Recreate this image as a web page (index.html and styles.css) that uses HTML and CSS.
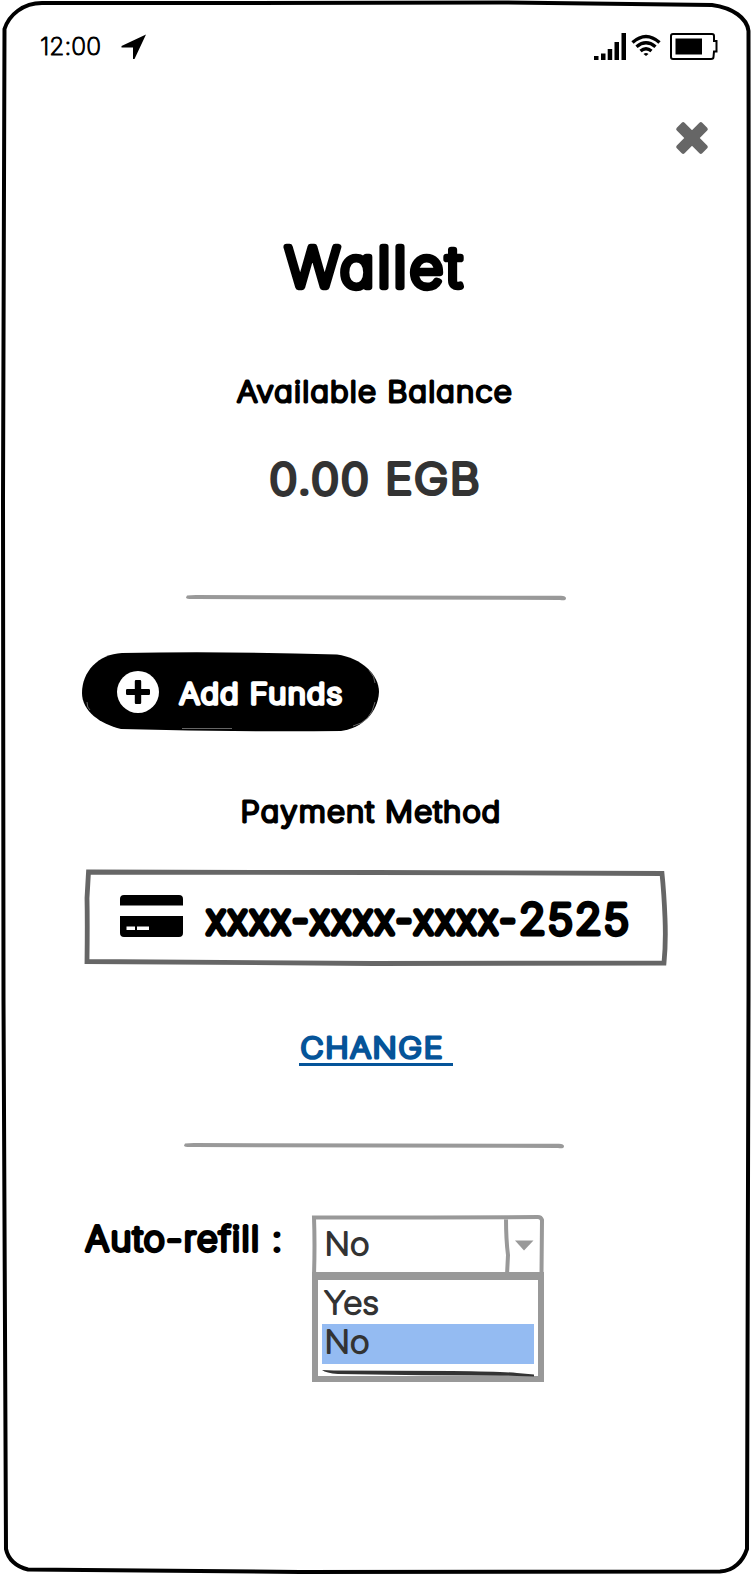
FILE: index.html
```html
<!DOCTYPE html>
<html lang="en">
<head>
<meta charset="utf-8">
<title>Wallet</title>
<link rel="stylesheet" href="styles.css">
</head>
<body>
<main class="phone">
  <svg class="outline" viewBox="0 0 752 1574" aria-hidden="true">
    <path class="frame" d="M4.500 29C9 15 23 3 42 3L250 3L500 2.500L712 5C733 8 747 18 748.500 31L749 500L748.500 1000L747 1549C743 1561 734 1571 720 1571.500L300 1572L28 1569.500C16 1567 8 1559 6 1549L3.500 1000L3 500Z"/>
  </svg>
  <header class="status">
    <svg class="time" width="82" height="40"><text class="ink ink-time" x="1" y="28" textLength="61">12:00</text></svg>
    <svg class="location" viewBox="0 0 26 26"><path d="M25 .5 13.500 25H12V13.500H.5V12Z"/></svg>
    <div class="indicators">
      <svg width="32" height="28" viewBox="0 0 32 28"><path d="M0 23h4.500v4H0zM7 20.500h4.500V27H7zM13.700 16h4.500v11h-4.500zM20.500 9H25v18h-4.500zM27.500 0H32v27h-4.500z"/></svg>
      <svg class="wifi" width="30" height="21" viewBox="0 0 30 21"><path class="arc" d="M1.500 7.500Q15-4.500 28.500 7.500M5.500 11.700Q15 3.800 24.500 11.700M9.500 16Q15 11.500 20.500 16"/><path d="M12.500 19Q15 17 17.500 19L15 21Z"/></svg>
      <svg class="battery" width="48" height="27" viewBox="0 0 48 27"><path class="shell" d="M3 1H42Q44 1 44 3V8H46.500V18.500H44L43.500 24Q43.500 26 41 26H3Q1 26 1 24V3Q1 1 3 1Z"/><path d="M5.500 5.500H32V21.500H5.500z"/></svg>
    </div>
  </header>
  <button class="close" aria-label="Close"><svg width="32" height="32" viewBox="0 0 32 32"><g transform="rotate(45 16 16)"><rect x="-2" y="10.500" width="36" height="11" rx="2"/><rect x="10.500" y="-2" width="11" height="36" rx="2"/></g></svg></button>
  <h1 class="title"><svg width="752" height="80"><text class="ink ink-title" x="285" y="60" textLength="180" lengthAdjust="spacingAndGlyphs">Wallet</text></svg></h1>
  <h2 class="label-balance"><svg width="752" height="40"><text class="ink ink-label" x="237" y="30.500" textLength="276" lengthAdjust="spacingAndGlyphs">Available Balance</text></svg></h2>
  <p class="balance"><svg width="752" height="60"><text class="ink ink-balance" x="269.500" y="45" textLength="212" lengthAdjust="spacingAndGlyphs">0.00 EGB</text></svg></p>
  <svg class="rule" viewBox="0 0 380 6"><path d="M1 .5Q5 0 10 0L375 .8Q380 1 380 3.500T374 5L10 4Q0 4.500 0 2.500Z"/></svg>
  <button class="add">
    <svg class="add-shape" viewBox="0 0 297 80"><path d="M40 1Q140-1 255 2.500C280 6 297 23 297 40C296 60 281 76 259 79Q150 80 39 77C18 72 0 59 0 41C0 20 16 2 40 1Z"/><path class="sheen" d="M287 18Q293 25 293 31M293 50Q289 70 271 74M5 50Q5 56 8 58M100 76.500H150"/></svg>
    <svg class="plus" width="42" height="42" viewBox="0 0 42 42"><circle cx="21" cy="21" r="21"/><path d="M19 9h4q1.200 0 1.200 1.200V18h7.600Q33 18 33 19.200v3.600Q33 24 31.800 24h-7.600v7.800Q24.200 33 23 33h-4q-1.200 0-1.200-1.200V24h-7.600Q9 24 9 22.800v-3.600Q9 18 10.200 18h7.600v-7.800Q17.800 9 19 9z"/></svg>
    <svg class="add-text" width="180" height="40"><text class="ink ink-add" x="2.500" y="29.500" textLength="164" lengthAdjust="spacingAndGlyphs">Add Funds</text></svg>
  </button>
  <h2 class="label-method"><svg width="752" height="40"><text class="ink ink-label" x="240.500" y="30.500" textLength="261" lengthAdjust="spacingAndGlyphs">Payment Method</text></svg></h2>
  <div class="card">
    <svg class="card-shape" viewBox="0 0 584 98"><path d="M4.500 4 290 4.500 578 5.500Q580 25 581 50T580 95L290 95.500 3 93.500Q3.500 55 3 30Z"/></svg>
    <svg class="card-icon" width="63" height="42" viewBox="0 0 63 42"><path d="M0 10.500V4Q0 0 4 0h55q4 0 4 4v6.500zM0 21h63v17q0 4-4 4H4q-4 0-4-4zM6.500 31.500V35H15v-3.500zm10.500 0V35h12v-3.500z"/></svg>
    <svg class="number" width="440" height="60"><text class="ink ink-number" x="3.500" y="45"><tspan class="masked" textLength="312" lengthAdjust="spacingAndGlyphs">xxxx-xxxx-xxxx-</tspan><tspan x="316" textLength="112" lengthAdjust="spacingAndGlyphs">2525</tspan></text></svg>
  </div>
  <a class="change"><svg width="154" height="36"><text class="ink ink-change" x="1.500" y="30.500" textLength="143.500" lengthAdjust="spacingAndGlyphs">CHANGE</text></svg></a>
  <svg class="rule rule-second" viewBox="0 0 380 6"><path d="M1 .5Q5 0 10 0L375 .8Q380 1 380 3.500T374 5L10 4Q0 4.500 0 2.500Z"/></svg>
  <section class="refill">
    <svg width="228" height="50"><text class="ink ink-refill" x="1.500" y="36" textLength="198" lengthAdjust="spacingAndGlyphs">Auto-refill :</text></svg>
    <div class="select">
      <div class="field">
        <svg class="field-shape" viewBox="0 0 232 60"><path d="M2 60Q3 30 2 2.500L120 2.500 226 2Q229 2 230 5L229.500 60M194 3Q194 25 196 40L195 60"/><path class="arrow" d="M203 25.500h18.500L212 35.500z"/></svg>
        <svg width="60" height="57"><text class="ink ink-option" x="-.5" y="39.500" textLength="45" lengthAdjust="spacingAndGlyphs">No</text></svg>
      </div>
      <ul class="options">
        <li class="option"><svg width="80" height="42"><text class="ink ink-option" x="2" y="31.500" textLength="55" lengthAdjust="spacingAndGlyphs">Yes</text></svg></li>
        <li class="option chosen"><svg width="80" height="40"><text class="ink ink-option" x="2.500" y="29" textLength="45" lengthAdjust="spacingAndGlyphs">No</text></svg></li>
      </ul>
      <svg class="scribble" width="212" height="7" viewBox="0 0 212 7"><path d="M0 0 12 .5 130 1Q180 1.500 195 3L212 4.500V6.500L195 6Q160 5.200 100 5.200L16 4Q4 3 0 0Z"/></svg>
    </div>
  </section>
</main>
</body>
</html>
```
FILE: styles.css
```css
* { box-sizing: border-box; }
body { margin: 0; background: #fff; }
svg { display: block; flex: none; overflow: visible; }
h1, h2, p, ul { margin: 0; padding: 0; list-style: none; }
button { border: 0; background: none; padding: 0; font: inherit; color: inherit; }

.phone {
  position: relative;
  display: flex;
  flex-direction: column;
  width: 752px;
  height: 1574px;
  overflow: hidden;
  font-family: Inter, "Liberation Sans", sans-serif;
  font-feature-settings: "cv11", "calt" 0;
  color: #000;
  white-space: nowrap;
}
.outline { position: absolute; inset: 0; width: 752px; height: 1574px; pointer-events: none; }
.frame { fill: none; stroke: #000; stroke-width: 4; }

/* marker-pen lettering: thin glyphs thickened with a round stroke */
.ink { font-weight: 200; fill: currentColor; stroke: currentColor; stroke-linejoin: round; stroke-linecap: round; }
.ink-time { font-size: 24.500px; stroke-width: 1; }
.ink-title { font-size: 55px; stroke-width: 6.300; letter-spacing: 3px; }
.ink-label { font-size: 29px; stroke-width: 2.800; letter-spacing: 1.100px; }
.ink-balance { font-size: 42.400px; stroke-width: 4.200; letter-spacing: 1.800px; }
.ink-add { font-size: 28px; stroke-width: 3.500; letter-spacing: 1.200px; }
.ink-number { font-size: 41.500px; stroke-width: 4.800; letter-spacing: 2px; }
.masked { letter-spacing: 3px; stroke-width: 5.600; }
.ink-change { font-size: 28.600px; stroke-width: 3.200; letter-spacing: 1.500px; }
.ink-refill { font-size: 33.300px; stroke-width: 3.800; letter-spacing: 1.400px; }
.ink-option { font-size: 30.800px; stroke-width: 1.900; }

.status { display: flex; align-items: center; height: 40px; margin: 27px 34px 0 39px; }
.location { width: 26px; height: 26px; }
.indicators { display: flex; align-items: flex-start; margin-left: auto; height: 28px; }
.wifi { margin: 2px 0 0 5px; }
.arc { fill: none; stroke: #000; stroke-width: 3.4; }
.battery { margin: 0 0 0 9px; }
.shell { fill: none; stroke: #000; stroke-width: 2; }

.close { align-self: flex-end; margin: 55px 44px 0 0; fill: #666; }

.title { margin-top: 73px; }
.label-balance { margin-top: 64px; }
.balance { margin-top: 38px; color: #333; }

.rule { width: 380px; height: 6px; margin: 86px 0 0 186px; fill: #999; }
.rule-second { margin: 77px 0 0 184px; }

.add { position: relative; display: flex; align-items: center; width: 297px; height: 80px; margin: 51px 0 0 82px; padding-left: 34.500px; color: #fff; }
.add-shape { position: absolute; inset: 0; width: 297px; height: 80px; fill: #000; }
.sheen { fill: none; stroke: #aaa; stroke-width: .6; }
.plus { position: relative; fill: #000; }
.plus circle { fill: #fff; }
.add-text { position: relative; margin-left: 18px; margin-top: 4px; }

.label-method { margin-top: 59px; }

.card { position: relative; display: flex; align-items: center; width: 584px; height: 98px; margin: 37px 0 0 84px; padding-left: 36px; }
.card-shape { position: absolute; inset: 0; width: 584px; height: 98px; }
.card-shape path { fill: none; stroke: #666; stroke-width: 4.8; }
.card-icon { margin-bottom: 2px; fill-rule: evenodd; }
.number { margin-left: 20px; margin-top: 3px; }

.change { display: block; width: 154px; height: 39px; margin: 61px 0 0 299px; border-bottom: 3px solid #055499; color: #055499; }

.refill { display: flex; align-items: flex-start; margin: 66px 0 0 84px; }
.select { display: flex; flex-direction: column; width: 232px; height: 167px; color: #333; }
.field { position: relative; height: 57px; padding-left: 13px; }
.field-shape { position: absolute; inset: 0; width: 232px; height: 60px; }
.field-shape path { fill: none; stroke: #999; stroke-width: 4; }
.field-shape .arrow { fill: #999; stroke: none; }
.options { height: 110px; border: 6px solid #999; border-top-width: 8px; padding: 2px 4px 0; }
.option { height: 42px; }
.chosen { height: 40px; background: #94bbf2; }
.scribble { margin: -12px 0 0 10px; fill: #333; position: relative; }
```
